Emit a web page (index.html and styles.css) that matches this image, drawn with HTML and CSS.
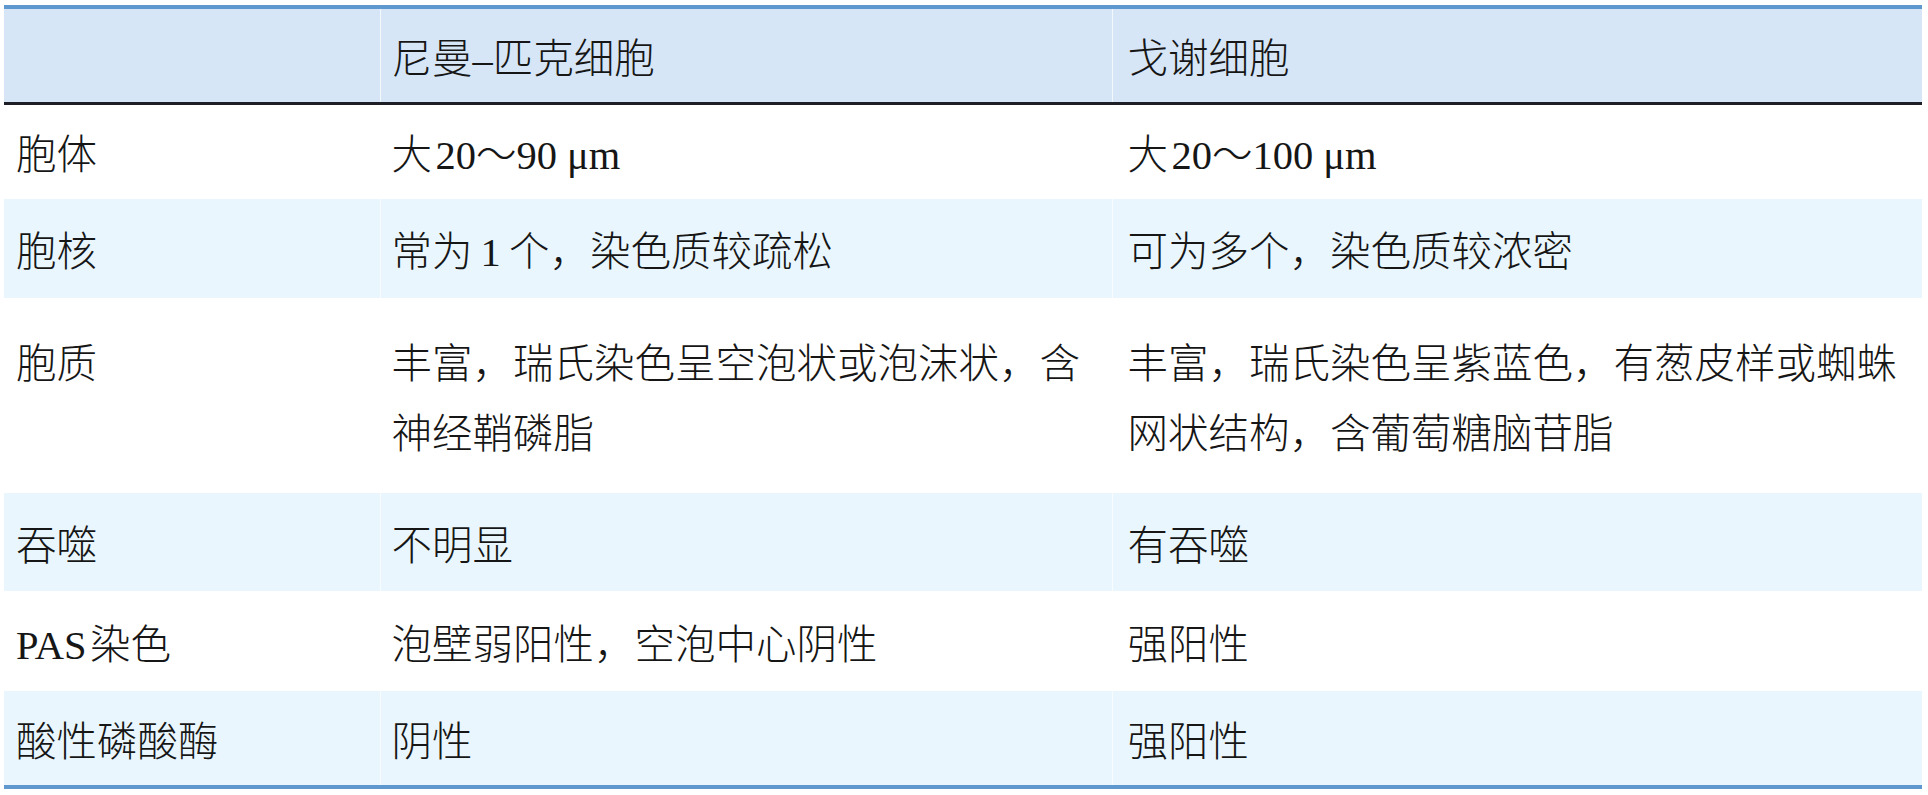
FILE: index.html
```html
<!DOCTYPE html>
<html lang="zh-CN">
<head>
<meta charset="utf-8">
<title>尼曼-匹克细胞与戈谢细胞</title>
<link rel="stylesheet" href="styles.css">
</head>
<body>
<table class="cmp">
  <colgroup>
    <col class="c1"><col class="c2"><col class="c3">
  </colgroup>
  <thead>
    <tr class="head">
      <th class="k"></th>
      <th class="m">尼曼–匹克细胞</th>
      <th class="g">戈谢细胞</th>
    </tr>
  </thead>
  <tbody>
    <tr class="r1">
      <td class="k">胞体</td>
      <td class="m">大&#8202;20～90 μm</td>
      <td class="g">大&#8202;20～100 μm</td>
    </tr>
    <tr class="r2 alt">
      <td class="k">胞核</td>
      <td class="m">常为&#8201;1&#8201;个，染色质较疏松</td>
      <td class="g">可为多个，染色质较浓密</td>
    </tr>
    <tr class="r3">
      <td class="k top">胞质</td>
      <td class="m">丰富，瑞氏染色呈空泡状或泡沫状，含<br>神经鞘磷脂</td>
      <td class="g">丰富，瑞氏染色呈紫蓝色，有葱皮样或蜘蛛<br>网状结构，含葡萄糖脑苷脂</td>
    </tr>
    <tr class="r4 alt">
      <td class="k">吞噬</td>
      <td class="m">不明显</td>
      <td class="g">有吞噬</td>
    </tr>
    <tr class="r5">
      <td class="k">PAS&#8202;染色</td>
      <td class="m">泡壁弱阳性，空泡中心阴性</td>
      <td class="g">强阳性</td>
    </tr>
    <tr class="r6 alt">
      <td class="k">酸性磷酸酶</td>
      <td class="m">阴性</td>
      <td class="g">强阳性</td>
    </tr>
  </tbody>
</table>
</body>
</html>
```

FILE: styles.css
```css
html, body {
  margin: 0;
  padding: 0;
  background: #ffffff;
}

body {
  padding: 5px 0 0 4px;
}

.cmp {
  border-collapse: collapse;
  table-layout: fixed;
  width: 1918px;
  font-family: "Liberation Serif", "Noto Sans CJK SC", serif;
  font-size: 40.5px;
  font-weight: 300;
  color: #161616;
  line-height: 70px;
  border-top: 4.5px solid #5f97cf;
  border-bottom: 4px solid #5f97cf;
}

.c1 { width: 376px; }
.c2 { width: 732px; }
.c3 { width: 810px; }

.cmp th,
.cmp td {
  padding: 9px 0 0 0;
  text-align: left;
  vertical-align: middle;
  font-weight: 300;
}

.cmp .k { padding-left: 12px; }
.cmp .m { padding-left: 11px; border-left: 1px solid rgba(255, 255, 255, 0.7); }
.cmp .g { padding-left: 15px; border-left: 1px solid rgba(255, 255, 255, 0.7); }

.head {
  background: #d6e6f6;
  height: 96px;
  border-bottom: 3px solid #1d1e26;
}

.alt { background: #eaf6fd; }

.r1 { height: 96px; }
.r2 { height: 99px; }
.r3 { height: 195px; }
.r4 { height: 98px; }
.r5 { height: 100px; }
.r6 { height: 96px; }

.cmp td.top {
  vertical-align: top;
  padding-top: 32px;
}
```
